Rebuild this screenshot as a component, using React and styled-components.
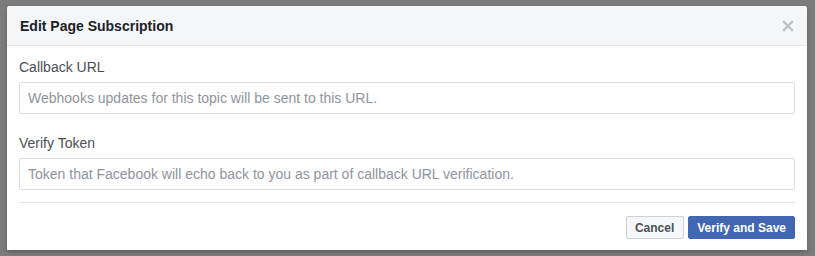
import React from "react";
import styled, { createGlobalStyle } from "styled-components";

const Global = createGlobalStyle`
  html, body { margin: 0; padding: 0; }
  body {
    background: #7c7c7c;
    font-family: "Liberation Sans", Helvetica, Arial, sans-serif;
    width: 815px;
    height: 256px;
    overflow: hidden;
  }
`;

const Page = styled.div`
  padding: 6px 0 0 7px;
`;

const Dialog = styled.div`
  width: 800px;
  background: #fff;
  border-radius: 3px 3px 0 0;
  box-shadow: 0 2px 4px rgba(0, 0, 0, 0.25);
`;

const Header = styled.div`
  display: flex;
  align-items: center;
  justify-content: space-between;
  height: 39px;
  padding: 0 12px 0 13px;
  background: #f5f6f7;
  border-bottom: 1px solid #e5e5e5;
  border-radius: 3px 3px 0 0;
`;

const Title = styled.h2`
  margin: 0;
  font-size: 14px;
  font-weight: bold;
  color: #1d2129;
`;

const Close = styled.button`
  border: 0;
  background: none;
  padding: 0;
  display: flex;
  width: 12px;
  height: 12px;
  margin-right: 1px;
  cursor: pointer;
`;

const Body = styled.div`
  padding: 12px 12px 11px;
`;

const Field = styled.div`
  display: flex;
  flex-direction: column;
  margin-bottom: ${(p) => p.$mb || 0}px;
`;

const Label = styled.label`
  font-size: 14px;
  line-height: 18px;
  color: #4b4f56;
  margin-bottom: 6px;
`;

const Input = styled.input`
  box-sizing: border-box;
  height: 32px;
  width: 100%;
  border: 1px solid #dddfe2;
  border-radius: 2px;
  padding: 0 8px;
  font-family: inherit;
  font-size: 14px;
  color: #1d2129;
  outline: none;
  &::placeholder { color: #90949c; }
`;

const Divider = styled.hr`
  border: 0;
  border-top: 1px solid #e5e5e5;
  margin: 12px 0 13px;
`;

const Actions = styled.div`
  display: flex;
  justify-content: flex-end;
  gap: 4px;
`;

const Button = styled.button`
  box-sizing: border-box;
  height: 23px;
  padding: 0 ${(p) => (p.$primary ? 8 : 9)}px 0 8px;
  border-radius: 2px;
  font-family: inherit;
  font-size: 12px;
  font-weight: bold;
  border: 1px solid ${(p) => (p.$primary ? "#4267b2" : "#ced0d4")};
  background: ${(p) => (p.$primary ? "#4267b2" : "#f6f7f9")};
  color: ${(p) => (p.$primary ? "#fff" : "#4b4f56")};
  cursor: pointer;
`;

export default function App() {
  return (
    <>
      <Global />
      <Page>
        <Dialog>
          <Header>
            <Title>Edit Page Subscription</Title>
            <Close aria-label="Close">
              <svg width="12" height="12" viewBox="0 0 12 12">
                <path d="M2 2 L10 10 M10 2 L2 10" stroke="#bec3c9" strokeWidth="2.4" strokeLinecap="square" />
              </svg>
            </Close>
          </Header>
          <Body>
            <Field $mb={20}>
              <Label>Callback URL</Label>
              <Input placeholder="Webhooks updates for this topic will be sent to this URL." />
            </Field>
            <Field>
              <Label>Verify Token</Label>
              <Input placeholder="Token that Facebook will echo back to you as part of callback URL verification." />
            </Field>
            <Divider />
            <Actions>
              <Button>Cancel</Button>
              <Button $primary>Verify and Save</Button>
            </Actions>
          </Body>
        </Dialog>
      </Page>
    </>
  );
}
